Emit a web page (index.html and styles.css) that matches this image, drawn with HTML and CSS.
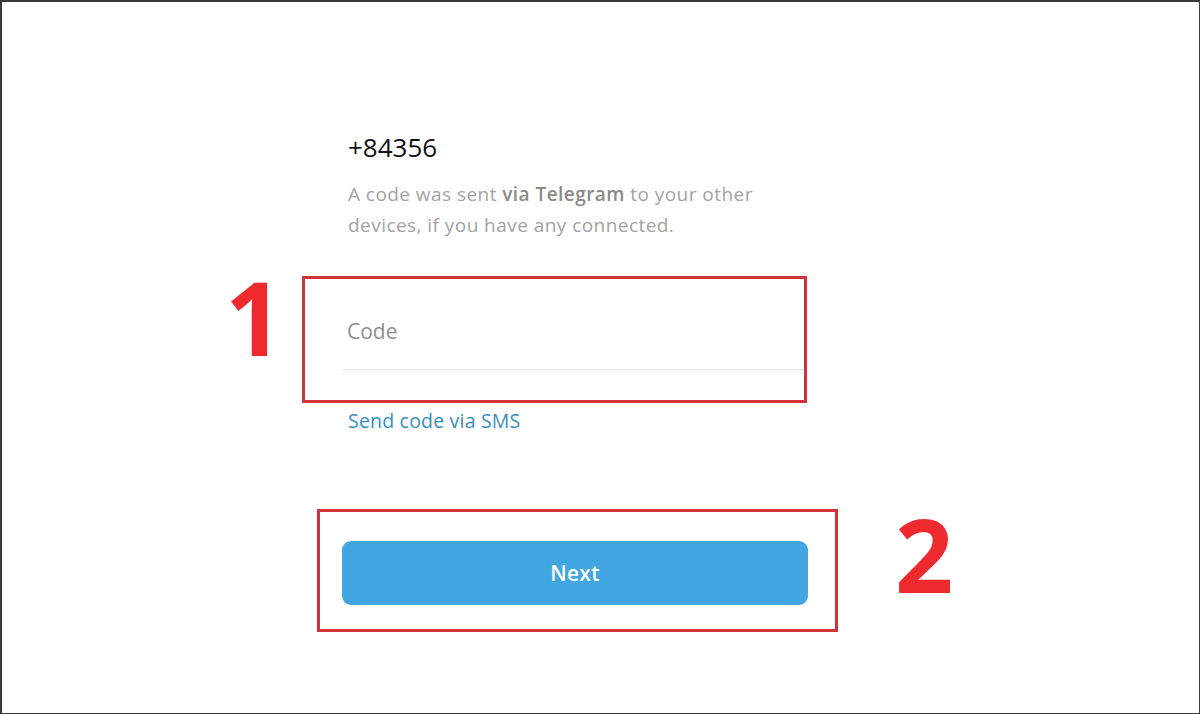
FILE: index.html
```html
<!DOCTYPE html>
<html lang="en">
<head>
<meta charset="utf-8">
<title>Telegram – Enter code</title>
<link rel="stylesheet" href="styles.css">
</head>
<body>
<div class="frame">
  <main class="auth">
    <h1 class="phone">+84356</h1>
    <p class="hint">A code was sent <b>via Telegram</b> to your other devices, if you have any connected.</p>
    <div class="field">
      <input class="code-input" type="text" placeholder="Code">
    </div>
    <a class="sms-link" href="#">Send code via SMS</a>
    <button class="next-btn" type="button">Next</button>
  </main>
  <div class="mark mark-1"></div>
  <div class="mark mark-2"></div>
  <span class="step step-1">1</span>
  <span class="step step-2">2</span>
</div>
</body>
</html>
```
FILE: styles.css
```css
* { box-sizing: border-box; }
html, body {
  margin: 0;
  padding: 0;
  background: #ffffff;
}
.frame {
  position: relative;
  width: 1200px;
  height: 714px;
  border-style: solid;
  border-color: #3a3a3a;
  border-width: 2px 1px 1px 2px;
  background: #ffffff;
  font-family: "Open Sans", "Noto Sans", sans-serif;
  overflow: hidden;
}
.auth {
  display: flex;
  flex-direction: column;
  align-items: flex-start;
  width: 466px;
  margin-left: 340px;
  padding-top: 130px;
}
.phone {
  margin: 0 0 0 6px;
  font-size: 26px;
  line-height: 30px;
  font-weight: 500;
  color: #111111;
}
.hint {
  margin: 17px 0 0 6px;
  width: 430px;
  font-size: 19px;
  letter-spacing: 0.45px;
  line-height: 31px;
  color: #a3a3a3;
}
.hint b {
  font-weight: 600;
  color: #8a8a8a;
}
.field {
  width: 464px;
  margin-top: 52px;
  border-bottom: 1px solid #e4e4e4;
}
.code-input {
  display: block;
  width: 100%;
  border: 0;
  outline: none;
  background: transparent;
  padding: 0 0 0 5px;
  height: 76px;
  font-family: inherit;
  font-size: 21px;
  color: #222;
}
.code-input::placeholder {
  color: #8f8f8f;
}
.sms-link {
  margin: 39px 0 0 6px;
  font-size: 19.5px;
  letter-spacing: 0.2px;
  line-height: 24px;
  color: #3a8ebc;
  text-decoration: none;
}
.next-btn {
  margin-top: 108px;
  width: 466px;
  height: 64px;
  border: 0;
  border-radius: 9px;
  background: #42a6e2;
  color: #ffffff;
  font-family: inherit;
  font-size: 21px;
  letter-spacing: 0.3px;
  font-weight: 600;
  cursor: pointer;
}
.mark {
  position: absolute;
  border: 3px solid #d2333b;
}
.mark-1 {
  left: 300px;
  top: 274px;
  width: 505px;
  height: 127px;
}
.mark-2 {
  left: 315px;
  top: 507px;
  width: 521px;
  height: 123px;
}
.step {
  position: absolute;
  font-family: "Open Sans", sans-serif;
  font-weight: 700;
  font-size: 102px;
  line-height: 1;
  color: #ef2a2e;
}
.step-1 {
  left: 223px;
  top: 264px;
}
.step-2 {
  left: 893px;
  top: 501px;
}
```
